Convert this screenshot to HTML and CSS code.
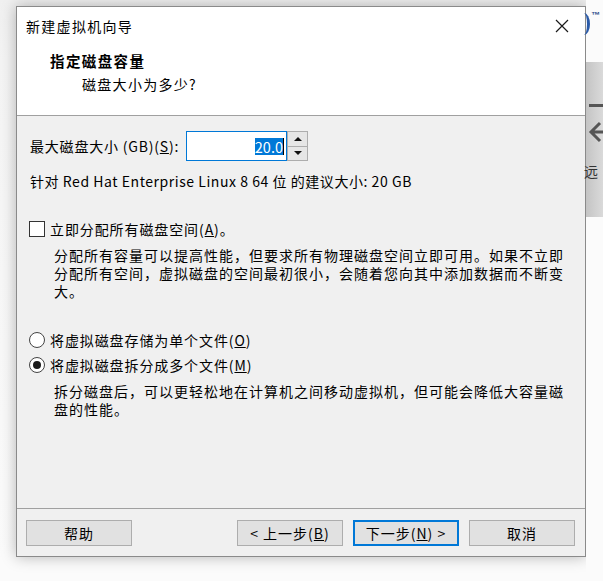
FILE: index.html
```html
<!DOCTYPE html>
<html lang="zh-CN">
<head>
<meta charset="utf-8">
<title>新建虚拟机向导</title>
<link rel="stylesheet" href="styles.css">
</head>
<body>
<div class="desktop">
  <div class="backdrop-app">
    <span class="logo-arc"></span>
    <span class="tm">™</span>
    <div class="side-panel">
      <span class="side-line"></span>
      <svg class="side-arrow" width="20" height="24" viewBox="0 0 20 24"><path d="M12 3 L3 12 L12 21 M3 12 H20" fill="none" stroke="#555" stroke-width="3"/></svg>
      <span class="side-text">远</span>
    </div>
  </div>

  <div class="dialog">
    <div class="titlebar">
      <span class="title">新建虚拟机向导</span>
      <svg class="close" width="14" height="14" viewBox="0 0 14 14"><path d="M1 1 L13 13 M13 1 L1 13" stroke="#1a1a1a" stroke-width="1.2" fill="none"/></svg>
    </div>
    <div class="header">
      <div class="h-title">指定磁盘容量</div>
      <div class="h-sub">磁盘大小为多少?</div>
    </div>
    <div class="body">
      <div class="size-row">
        <span class="size-label">最大磁盘大小 (GB)(<u>S</u>):</span>
        <div class="spin">
          <div class="spin-input"><span class="sel">20.0</span><span class="caret"></span></div>
          <div class="spin-btns">
            <div class="spin-btn"><svg width="8" height="5" viewBox="0 0 8 5"><path d="M0 5 L4 1 L8 5 Z" fill="#111"/></svg></div>
            <div class="spin-btn"><svg width="8" height="5" viewBox="0 0 8 5"><path d="M0 0 L8 0 L4 4 Z" fill="#111"/></svg></div>
          </div>
        </div>
      </div>
      <div class="rec">针对 Red Hat Enterprise Linux 8 64 位 的建议大小: 20 GB</div>

      <div class="check-row">
        <span class="checkbox"></span>
        <span class="opt-text">立即分配所有磁盘空间(<u>A</u>)。</span>
      </div>
      <p class="desc">分配所有容量可以提高性能，但要求所有物理磁盘空间立即可用。如果不立即分配所有空间，虚拟磁盘的空间最初很小，会随着您向其中添加数据而不断变大。</p>

      <div class="radio-row first">
        <span class="radio"></span>
        <span class="opt-text">将虚拟磁盘存储为单个文件(<u>O</u>)</span>
      </div>
      <div class="radio-row second">
        <span class="radio checked"></span>
        <span class="opt-text">将虚拟磁盘拆分成多个文件(<u>M</u>)</span>
      </div>
      <p class="desc">拆分磁盘后，可以更轻松地在计算机之间移动虚拟机，但可能会降低大容量磁盘的性能。</p>
    </div>
    <div class="footer">
      <button class="btn">帮助</button>
      <div class="spacer"></div>
      <button class="btn">&lt; 上一步(<u>B</u>)</button>
      <button class="btn default">下一步(<u>N</u>) &gt;</button>
      <button class="btn">取消</button>
    </div>
  </div>
</div>
</body>
</html>
```

FILE: styles.css
```css
* { box-sizing: border-box; }
html, body { margin: 0; padding: 0; }
body {
  width: 603px;
  height: 581px;
  overflow: hidden;
  background: #f7f7f7;
  font-family: "Noto Sans CJK SC", "Noto Sans", sans-serif;
  font-size: 14px;
  color: #000;
}
.desktop {
  position: relative;
  width: 603px;
  height: 581px;
  padding: 6px 0 0 16px;
  background: linear-gradient(#f0f0f0 0, #f4f4f4 60px, #fbfbfb 560px);
}
.backdrop-app {
  position: absolute;
  left: 586px;
  top: 0;
  width: 17px;
  height: 581px;
  background: #fbfbfb;
}
.logo-arc {
  position: absolute;
  left: -8px;
  top: 13px;
  width: 12px;
  height: 22px;
  border-right: 3px solid #2a5aa8;
  border-radius: 50%;
}
.tm {
  position: absolute;
  left: 5px;
  top: 10px;
  font-size: 9px;
  font-weight: bold;
  color: #2a4a8a;
  font-family: "Liberation Sans", sans-serif;
}
.side-panel {
  position: absolute;
  left: 0;
  top: 62px;
  width: 17px;
  height: 155px;
  background: linear-gradient(90deg, #c4c4c4, #dadada);
}
.side-line {
  position: absolute;
  left: 3px;
  top: 42px;
  width: 14px;
  height: 3px;
  background: #555;
}
.side-arrow {
  position: absolute;
  left: 2px;
  top: 58px;
}
.side-text {
  position: absolute;
  left: -2px;
  top: 99px;
  font-size: 14px;
  color: #333;
}

.dialog {
  width: 570px;
  height: 551px;
  border: 1px solid #8a8a8a;
  background: #f0f0f0;
  box-shadow: 0 0 14px rgba(0, 0, 0, 0.28);
  display: flex;
  flex-direction: column;
  letter-spacing: 0.9px;
}
.titlebar {
  height: 38px;
  background: #fff;
  display: flex;
  align-items: center;
  justify-content: space-between;
  padding: 0 16px 0 9px;
  font-size: 14px;
  letter-spacing: 1.3px;
}
.close { margin-top: -1px; }
.header {
  height: 71px;
  background: #fff;
  border-bottom: 1px solid #a0a0a0;
  padding: 6px 0 0 33px;
}
.h-title {
  font-weight: bold;
  font-size: 14.5px;
  line-height: 20px;
  letter-spacing: 1.4px;
}
.h-sub {
  margin: 3px 0 0 32px;
  line-height: 20px;
  letter-spacing: 1.3px;
}
.body {
  flex: 1;
  padding: 15px 0 0 12px;
  border-bottom: 1px solid #a0a0a0;
}
.size-row {
  display: flex;
  align-items: center;
  height: 30px;
}
.size-label {
  width: 157px;
  padding-left: 1px;
  letter-spacing: 0.8px;
  white-space: nowrap;
}
.spin {
  display: flex;
  height: 30px;
}
.spin-input {
  width: 101px;
  height: 30px;
  background: #fff;
  border: 1px solid #0078d7;
  display: flex;
  align-items: center;
  justify-content: flex-end;
  padding-right: 2px;
}
.sel {
  background: #0078d7;
  color: #fff;
  line-height: 17px;
  letter-spacing: 0;
  font-size: 14.5px;
}
.caret {
  width: 1px;
  height: 17px;
  background: #000;
}
.spin-btns {
  display: flex;
  flex-direction: column;
  width: 21px;
}
.spin-btn {
  flex: 1;
  background: #e6e6e6;
  border: 1px solid #adadad;
  display: flex;
  align-items: center;
  justify-content: center;
}
.spin-btn + .spin-btn { border-top: none; }
.rec {
  margin-top: 10px;
  line-height: 20px;
  padding-left: 1px;
  letter-spacing: 0.55px;
}
.check-row, .radio-row {
  display: flex;
  align-items: center;
  height: 20px;
}
.check-row { margin-top: 28px; }
.checkbox {
  width: 16px;
  height: 16px;
  border: 1px solid #333;
  background: #fff;
  margin-right: 5px;
}
.radio {
  width: 16px;
  height: 16px;
  border: 1px solid #444;
  border-radius: 50%;
  background: #fff;
  margin-right: 5px;
  position: relative;
}
.radio.checked::after {
  content: "";
  position: absolute;
  left: 3px;
  top: 3px;
  width: 8px;
  height: 8px;
  border-radius: 50%;
  background: #1a1a1a;
}
.opt-text { line-height: 20px; }
.desc {
  margin: 7px 0 0 25px;
  width: 520px;
  line-height: 18px;
  letter-spacing: 1px;
}
.radio-row.first { margin-top: 30px; }
.radio-row.second { margin-top: 5px; }
.footer {
  height: 47px;
  background: #f0f0f0;
  display: flex;
  align-items: flex-start;
  gap: 10px;
  padding: 11px 10px 0 9px;
}
.spacer { flex: 1; }
.btn {
  width: 106px;
  height: 26px;
  background: #e1e1e1;
  border: 1px solid #adadad;
  font-family: inherit;
  font-size: 14px;
  letter-spacing: 1px;
  color: #000;
  padding: 0;
}
.btn.default {
  border: 2px solid #0078d7;
}
```
